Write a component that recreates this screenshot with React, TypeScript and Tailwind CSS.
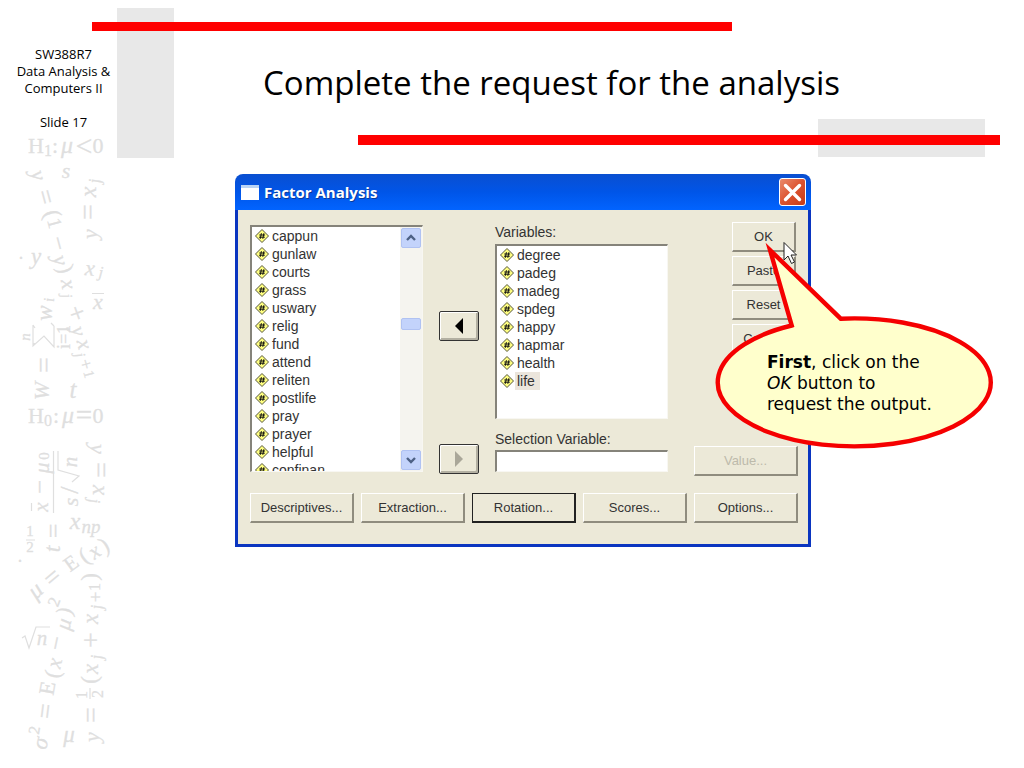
import { useState } from 'react'
import type { ReactNode } from 'react'

const SOURCE_VARS = [
  'cappun',
  'gunlaw',
  'courts',
  'grass',
  'uswary',
  'relig',
  'fund',
  'attend',
  'reliten',
  'postlife',
  'pray',
  'prayer',
  'helpful',
  'confinan',
]

const PICKED_VARS = ['degree', 'padeg', 'madeg', 'spdeg', 'happy', 'hapmar', 'health', 'life']

/** One piece of the formula border, placed by its centre. */
type Glyph = { t: string; x: number; y: number; size: number; rot?: number; roman?: boolean }

const GLYPHS: Glyph[] = [
  // H1: mu < 0
  { t: 'H', x: 36, y: 145, size: 22, roman: true },
  { t: '1', x: 48, y: 150, size: 16, roman: true },
  { t: ':', x: 55, y: 145, size: 22, roman: true },
  { t: 'μ', x: 67, y: 145, size: 24 },
  { t: '<', x: 84, y: 145, size: 30, roman: true },
  { t: '0', x: 98, y: 145, size: 22, roman: true },
  { t: 's', x: 66, y: 170, size: 22 },
  // y = (1 - y)x_j + y x_j+1, running down
  { t: 'y', x: 39, y: 175, size: 22, rot: 75 },
  { t: '=', x: 46, y: 197, size: 26, rot: 75, roman: true },
  { t: '(', x: 53, y: 214, size: 24, rot: 75, roman: true },
  { t: '1', x: 55, y: 223, size: 20, rot: 75, roman: true },
  { t: '−', x: 59, y: 243, size: 25, rot: 75, roman: true },
  { t: 'y', x: 61, y: 260, size: 22, rot: 75 },
  { t: ')', x: 66, y: 269, size: 23, rot: 75, roman: true },
  { t: 'x', x: 69, y: 284, size: 22, rot: 80 },
  { t: 'j', x: 67, y: 296, size: 15, rot: 80 },
  { t: '+', x: 77, y: 313, size: 27, rot: 70, roman: true },
  { t: 'y', x: 79, y: 331, size: 21, rot: 75 },
  { t: 'x', x: 85, y: 344, size: 22, rot: 75 },
  { t: 'j', x: 80, y: 355, size: 15, rot: 75 },
  { t: '+', x: 86, y: 364, size: 18, rot: 75, roman: true },
  { t: '1', x: 89, y: 374, size: 15, rot: 75, roman: true },
  // y = x_j, running up
  { t: 'y', x: 89, y: 234, size: 22, rot: -90 },
  { t: '=', x: 87, y: 212, size: 28, rot: -90, roman: true },
  { t: 'x', x: 88, y: 192, size: 24, rot: -90 },
  { t: 'j', x: 94, y: 181, size: 16, rot: -90 },
  { t: '.', x: 21, y: 253, size: 18, roman: true },
  { t: 'y', x: 36, y: 256, size: 23 },
  { t: 'x', x: 90, y: 268, size: 22, rot: 5 },
  { t: 'j', x: 101, y: 272, size: 16, rot: 5 },
  { t: 'x', x: 98, y: 301, size: 22 },
  // W = sum of w_i, running up
  { t: 'W', x: 41, y: 391, size: 22, rot: -90 },
  { t: '=', x: 43, y: 365, size: 28, rot: -90, roman: true },
  { t: 'n', x: 25, y: 337, size: 15, rot: -90 },
  { t: 'i=1', x: 64, y: 337, size: 18, rot: -90, roman: true },
  { t: 'w', x: 44, y: 313, size: 23, rot: -90 },
  { t: 'i', x: 49, y: 300, size: 15, rot: -90 },
  { t: 't', x: 73, y: 389, size: 25 },
  // H0: mu = 0
  { t: 'H', x: 36, y: 415, size: 22, roman: true },
  { t: '0', x: 48, y: 420, size: 16, roman: true },
  { t: ':', x: 56, y: 415, size: 22, roman: true },
  { t: 'μ', x: 68, y: 415, size: 24 },
  { t: '=', x: 84, y: 415, size: 29, roman: true },
  { t: '0', x: 98, y: 415, size: 22, roman: true },
  // t = (x - mu0) / (s / root n), running up
  { t: 'x', x: 41, y: 507, size: 21, rot: -90 },
  { t: '−', x: 39, y: 487, size: 25, rot: -90, roman: true },
  { t: 'μ', x: 41, y: 468, size: 22, rot: -90 },
  { t: '0', x: 44, y: 456, size: 15, rot: -90, roman: true },
  { t: 's', x: 70, y: 502, size: 22, rot: -90 },
  { t: '/', x: 69, y: 490, size: 26, rot: -90, roman: true },
  { t: 'n', x: 70, y: 462, size: 21, rot: -90 },
  { t: '=', x: 53, y: 531, size: 26, rot: -90, roman: true },
  { t: 't', x: 52, y: 549, size: 24, rot: -90 },
  // y = x_j, running down
  { t: 'y', x: 98, y: 449, size: 22, rot: 90 },
  { t: '=', x: 101, y: 470, size: 28, rot: 90, roman: true },
  { t: 'x', x: 100, y: 490, size: 23, rot: 90 },
  { t: 'j', x: 94, y: 501, size: 16, rot: 90 },
  { t: '1', x: 30, y: 531, size: 15, roman: true },
  { t: '2', x: 30, y: 547, size: 15, roman: true },
  { t: 'x', x: 75, y: 521, size: 24 },
  { t: 'np', x: 91, y: 526, size: 19 },
  { t: '.', x: 20, y: 556, size: 18, roman: true },
  // mu = E(x), slanted
  { t: 'μ', x: 35, y: 590, size: 24, rot: -42 },
  { t: '=', x: 52, y: 577, size: 27, rot: -40, roman: true },
  { t: 'E', x: 71, y: 563, size: 21, rot: -36, roman: true },
  { t: '(', x: 84, y: 556, size: 23, rot: -36, roman: true },
  { t: 'x', x: 94, y: 551, size: 22, rot: -36 },
  { t: ')', x: 104, y: 545, size: 23, rot: -30, roman: true },
  // sigma^2 = E(x - mu)^2, running up
  { t: 'σ', x: 40, y: 743, size: 23, rot: -75 },
  { t: '2', x: 34, y: 730, size: 16, rot: -80, roman: true },
  { t: '=', x: 45, y: 711, size: 27, rot: -83, roman: true },
  { t: 'E', x: 47, y: 688, size: 22, rot: -80, roman: true },
  { t: '(', x: 52, y: 674, size: 22, rot: -80, roman: true },
  { t: 'x', x: 54, y: 663, size: 22, rot: -78 },
  { t: '−', x: 56, y: 643, size: 25, rot: -78, roman: true },
  { t: 'μ', x: 63, y: 624, size: 22, rot: -78 },
  { t: ')', x: 64, y: 611, size: 22, rot: -75, roman: true },
  { t: '2', x: 54, y: 602, size: 17, rot: -70, roman: true },
  { t: 'n', x: 42, y: 638, size: 21 },
  { t: 'μ', x: 69, y: 734, size: 23 },
  // y = 1/2 (x_j + x_j+1), running up
  { t: 'y', x: 91, y: 737, size: 22, rot: -90 },
  { t: '=', x: 90, y: 715, size: 28, rot: -90, roman: true },
  { t: '1', x: 81, y: 695, size: 16, rot: -90, roman: true },
  { t: '2', x: 97, y: 694, size: 16, rot: -90, roman: true },
  { t: '(', x: 89, y: 680, size: 23, rot: -90, roman: true },
  { t: 'x', x: 90, y: 669, size: 23, rot: -90 },
  { t: 'j', x: 96, y: 657, size: 16, rot: -90 },
  { t: '+', x: 90, y: 640, size: 28, rot: -90, roman: true },
  { t: 'x', x: 90, y: 619, size: 23, rot: -90 },
  { t: 'j', x: 96, y: 607, size: 16, rot: -90 },
  { t: '+', x: 95, y: 597, size: 19, rot: -90, roman: true },
  { t: '1', x: 94, y: 587, size: 16, rot: -90, roman: true },
  { t: ')', x: 89, y: 577, size: 23, rot: -90, roman: true },
]

/** Pale statistics formulas down the left edge of the slide. */
function FormulaBorder() {
  return (
    <svg width="127" height="637" viewBox="0 131 127 637" aria-hidden="true" className="font-['Liberation_Serif',serif]">
      <g fill="#dfdfdf" stroke="#dfdfdf" strokeWidth="0.3" textAnchor="middle" dominantBaseline="central">
        {GLYPHS.map((g, i) => (
          <text
            key={i}
            x={g.x}
            y={g.y}
            fontSize={g.size}
            fontStyle={g.roman ? 'normal' : 'italic'}
            transform={g.rot ? `rotate(${g.rot} ${g.x} ${g.y})` : undefined}
          >
            {g.t}
          </text>
        ))}
      </g>
      <g fill="none" stroke="#dfdfdf" strokeWidth="1.2">
        {/* mean bars, fraction rules and roots */}
        <path d="M92 293.5h12M31.5 503v8M53.5 451v62M26 540h9M90 688v11" />
        <path d="M33 346l1.5-3M33 325v21l11-10 10 11v-21M33 325l2 3M54 326l-3-3" />
        <path d="M72 482l7-6-21-6v-19" />
        <path d="M22 638l3-2 4 12 7-21h14" />
      </g>
    </svg>
  )
}

/** Yellow diamond with a # that marks a numeric variable. */
function NumericIcon() {
  return (
    <svg width="14" height="14" viewBox="0 0 14 14" className="shrink-0" aria-hidden="true">
      <path d="M7 .5 13.5 7 7 13.5.5 7Z" fill="#ffff80" stroke="#55553a" strokeWidth="1" />
      <path d="M6.4 4.2 5.3 9.8M8.9 4.2 7.8 9.8M4.3 6h5.8M4 8.2h5.8" stroke="#111" strokeWidth="1" />
    </svg>
  )
}

function VariableRow({ name, current }: { name: string; current?: boolean }) {
  return (
    <li role="option" aria-selected={Boolean(current)} className="flex h-[18px] items-center gap-px pl-[3px]">
      <NumericIcon />
      <span className={current ? 'bg-[#ebe5dc] pr-[5px] pl-[2px] leading-[18px]' : 'pl-[2px]'}>{name}</span>
    </li>
  )
}

const SUNKEN = 'border-t-2 border-l-2 border-r border-b border-t-[#85837a] border-l-[#85837a] border-r-[#f8f7f2] border-b-[#f8f7f2] bg-white'

const RAISED = 'border-t border-l border-r-2 border-b-2 border-t-white border-l-white border-r-[#8f8c7e] border-b-[#8f8c7e]'

function DialogButton({
  children,
  className = 'w-[104px]',
  focused,
  disabled,
}: {
  children: ReactNode
  className?: string
  focused?: boolean
  disabled?: boolean
}) {
  return (
    <button
      type="button"
      disabled={disabled}
      className={`h-[30px] bg-[#ece9d8] text-[13px] ${className} ${
        focused ? 'border border-r-2 border-b-2 border-[#222]' : RAISED
      } ${disabled ? 'text-[#bdbaab]' : 'text-[#333]'}`}
    >
      {children}
    </button>
  )
}

function ArrowButton({ dir, disabled }: { dir: 'left' | 'right'; disabled?: boolean }) {
  return (
    <button
      type="button"
      disabled={disabled}
      aria-label={dir === 'left' ? 'Move variable back' : 'Move variable across'}
      className="flex h-[30px] w-10 items-center justify-center rounded-[2px] border border-[#333] bg-[#ece9d8] shadow-[inset_1px_1px_0_#fff,inset_-2px_-2px_0_#b3b0a2]"
    >
      <svg width="8" height="16" viewBox="0 0 8 16" aria-hidden="true">
        <path d={dir === 'left' ? 'M8 0v16L0 8Z' : 'M0 0v16l8-8Z'} fill={disabled ? '#aaa799' : '#000'} />
      </svg>
    </button>
  )
}

function ScrollButton({ up }: { up?: boolean }) {
  return (
    <button
      type="button"
      aria-label={up ? 'Scroll up' : 'Scroll down'}
      className="flex h-5 w-5 shrink-0 items-center justify-center rounded-[2px] border border-[#b0c2f2] bg-[#c3d3fb]"
    >
      <svg width="10" height="8" viewBox="0 0 10 8" fill="none" stroke="#4d6185" strokeWidth="2.4" aria-hidden="true">
        <path d={up ? 'M1 6l4-4 4 4' : 'M1 2l4 4 4-4'} />
      </svg>
    </button>
  )
}

function Callout() {
  return (
    <div className="absolute top-16 left-[475px] h-[216px] w-[290px]">
      <svg width="290" height="216" viewBox="0 0 290 216" className="absolute inset-0" aria-hidden="true">
        {/* mouse pointer */}
        <path
          d="M74 4.5v17.5l4-4 3.500 7.500 3-1.500-3.500-7h5.500Z"
          fill="#fff"
          stroke="#222"
          strokeWidth="1"
        />
        <path
          d="M130.7 80.7A136.5 64 0 1 1 81.7 87.5L60 12Z"
          fill="#ffffcc"
          stroke="#f50000"
          strokeWidth="4.4"
          strokeMiterlimit="6"
        />
      </svg>
      <p className="relative pt-[114px] pl-[57px] font-['DejaVu_Sans',sans-serif] text-[17px] leading-[21px] text-black">
        <b>First</b>, click on the
        <br />
        <i>OK</i> button to
        <br />
        request the output.
      </p>
    </div>
  )
}

function FactorAnalysisDialog() {
  const [selection, setSelection] = useState('')

  return (
    <section className="relative w-full max-w-xl font-['Liberation_Sans',sans-serif] text-[#333]">
      <div className="flex h-9 items-center rounded-t-lg bg-linear-to-b from-[#0a4fd0] via-[#0055e8] to-[#0264ff] pr-[5px] pl-[6px]">
        <span className="h-[15px] w-[18px] border-t-3 border-[#b9d3f5] bg-white" />
        <h2 className="flex-1 pl-[5px] font-['Open_Sans',sans-serif] text-[15px] font-bold text-white [text-shadow:1px_1px_0_#0a3a9a]">
          Factor Analysis
        </h2>
        <button
          type="button"
          aria-label="Close"
          className="flex h-[28px] w-[27px] items-center justify-center rounded-[3px] border border-white bg-linear-to-br from-[#e98a6c] via-[#dc5330] to-[#c63a14]"
        >
          <svg width="19" height="19" viewBox="0 0 19 19" stroke="#fff" strokeWidth="3.4" strokeLinecap="round" aria-hidden="true">
            <path d="M2.5 2.5l14 14M16.5 2.5l-14 14" />
          </svg>
        </button>
      </div>

      <div className="border-3 border-t-0 border-[#0a35c0] bg-[#ece9d8] pt-3 pr-[10px] pb-[21px] pl-3">
        <div className="flex h-[254px] gap-4">
          {/* all variables */}
          <div className="w-[173px] pt-[3px] pb-1">
            <div className={`flex h-full overflow-hidden ${SUNKEN}`}>
              <ul role="listbox" aria-label="Available variables" className="flex-1 text-[14px] leading-[18px]">
                {SOURCE_VARS.map((name) => (
                  <VariableRow key={name} name={name} />
                ))}
              </ul>
              <div className="flex w-[22px] flex-col items-center bg-[#f5f4ef] pt-px pb-px">
                <ScrollButton up />
                <span className="mt-[70px] h-3 w-5 rounded-[2px] border border-[#b0c2f2] bg-[#c3d3fb]" />
                <span className="flex-1" />
                <ScrollButton />
              </div>
            </div>
          </div>

          <div className="flex w-10 flex-col justify-between pt-[89px] pb-[2px]">
            <ArrowButton dir="left" />
            <ArrowButton dir="right" disabled />
          </div>

          {/* chosen variables */}
          <div className="flex w-[173px] flex-col pb-1 text-[14px] leading-5">
            <span id="variables-label" className="mb-[2px]">
              Variables:
            </span>
            <ul role="listbox" aria-labelledby="variables-label" className={`flex-1 leading-[18px] ${SUNKEN}`}>
              {PICKED_VARS.map((name) => (
                <VariableRow key={name} name={name} current={name === 'life'} />
              ))}
            </ul>
            <label htmlFor="selection" className="mt-[10px] mb-px">
              Selection Variable:
            </label>
            <input
              id="selection"
              value={selection}
              onChange={(e) => setSelection(e.target.value)}
              className={`h-[22px] w-full px-1 outline-none ${SUNKEN}`}
            />
          </div>

          <div className="flex flex-1 flex-col items-end">
            <div className="flex flex-col gap-1 pr-[2px]">
              <DialogButton className="w-16">OK</DialogButton>
              <DialogButton className="w-16">Paste</DialogButton>
              <DialogButton className="w-16">Reset</DialogButton>
              <DialogButton className="w-16">Cancel</DialogButton>
            </div>
            <span className="flex-1" />
            <DialogButton disabled>Value...</DialogButton>
          </div>
        </div>

        <div className="mt-[17px] flex justify-between">
          <DialogButton>Descriptives...</DialogButton>
          <DialogButton>Extraction...</DialogButton>
          <DialogButton focused>Rotation...</DialogButton>
          <DialogButton>Scores...</DialogButton>
          <DialogButton>Options...</DialogButton>
        </div>
      </div>

      <Callout />
    </section>
  )
}

export default function App() {
  return (
    <div className="relative flex min-h-screen bg-white font-['Open_Sans',sans-serif] text-black">
      {/* slide ornaments: grey blocks with the red rules across them */}
      <div className="absolute top-2 left-[117px] h-[150px] w-[57px] bg-[#e8e8e8]" />
      <div className="absolute top-[119px] right-[39px] h-[38px] w-[167px] bg-[#e8e8e8]" />
      <div className="absolute top-[22px] left-[9%] h-[9px] w-[62.5%] bg-[#ff0000]" />
      <div className="absolute top-[135px] right-6 left-[35%] h-[10px] bg-[#ff0000]" />

      <aside className="relative w-[127px] shrink-0 pt-[46px]">
        <p className="text-center text-[13px] leading-[17px]">
          SW388R7
          <br />
          Data Analysis &amp;
          <br />
          Computers II
          <br />
          <br />
          Slide 17
        </p>
        <FormulaBorder />
      </aside>

      <div className="relative min-w-0 flex-1">
        <h1 className="pt-[60px] pr-12 text-center text-[33px] leading-[46px]">
          Complete the request for the analysis
        </h1>
        <main className="pt-[68px] pl-[108px]">
          <FactorAnalysisDialog />
        </main>
      </div>
    </div>
  )
}
